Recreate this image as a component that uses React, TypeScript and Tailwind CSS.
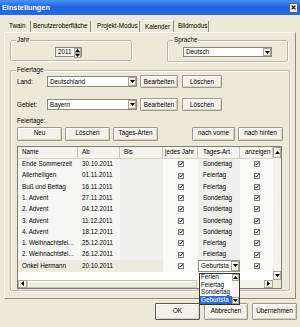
import React from "react";

type Dir = "up" | "down" | "left" | "right";

const rows = [
  ["Ende Sommerzeit", "30.10.2011", "Sondertag"],
  ["Allerheiligen", "01.11.2011", "Feiertag"],
  ["Buß und Bettag", "16.11.2011", "Feiertag"],
  ["1. Advent", "27.11.2011", "Sondertag"],
  ["2. Advent", "04.12.2011", "Sondertag"],
  ["3. Advent", "11.12.2011", "Sondertag"],
  ["4. Advent", "18.12.2011", "Sondertag"],
  ["1. Weihnachtsfei...", "25.12.2011", "Feiertag"],
  ["2. Weihnachtsfei...", "26.12.2011", "Feiertag"],
];

const tagesArten = ["Ferien", "Feiertag", "Sondertag", "Geburtsta"];

function Tri({ dir }: { dir: Dir }) {
  if (dir === "up")
    return (
      <svg width="5" height="3" viewBox="0 0 5 3">
        <polygon points="0,3 2.5,0 5,3" fill="#000" />
      </svg>
    );
  if (dir === "down")
    return (
      <svg width="5" height="3" viewBox="0 0 5 3">
        <polygon points="0,0 5,0 2.5,3" fill="#000" />
      </svg>
    );
  if (dir === "left")
    return (
      <svg width="3" height="5" viewBox="0 0 3 5">
        <polygon points="3,0 3,5 0,2.5" fill="#000" />
      </svg>
    );
  return (
    <svg width="3" height="5" viewBox="0 0 3 5">
      <polygon points="0,0 0,5 3,2.5" fill="#000" />
    </svg>
  );
}

function ArrowBtn({ dir, className }: { dir: Dir; className: string }) {
  return (
    <div
      className={
        "flex shrink-0 items-center justify-center bg-[#F1EFE5] border border-[#A9A695] shadow-[inset_1px_1px_0_#fff] " +
        className
      }
    >
      <Tri dir={dir} />
    </div>
  );
}

function Btn({
  className,
  children,
}: {
  className: string;
  children: React.ReactNode;
}) {
  return (
    <div
      className={
        "flex shrink-0 items-center justify-center rounded-[1px] bg-[#F4F2E8] shadow-[inset_1px_1px_0_#fff,inset_-1px_-1px_0_#D6D2C2] " +
        className
      }
    >
      {children}
    </div>
  );
}

function Combo({ className, value }: { className: string; value: string }) {
  return (
    <div className={"flex shrink-0 bg-white border border-[#8C8A7E] " + className}>
      <div className="flex flex-1 items-center pl-[2px] whitespace-nowrap overflow-hidden">
        {value}
      </div>
      <ArrowBtn dir="down" className="w-[8px]" />
    </div>
  );
}

function Check() {
  return (
    <svg width="6" height="6" viewBox="0 0 6 6">
      <rect x="0.5" y="0.5" width="5" height="5" fill="#fff" stroke="#7A7A7A" />
      <path d="M1.3 2.7 L2.5 4 L4.7 1.4" fill="none" stroke="#000" strokeWidth="1" />
    </svg>
  );
}

function HeadCell({ className, children }: { className: string; children: React.ReactNode }) {
  return (
    <div
      className={
        "flex h-full shrink-0 items-center border-r border-[#C9C6B6] " + className
      }
    >
      {children}
    </div>
  );
}

export default function App() {
  return (
    <div className="w-[300px] h-[327px] overflow-hidden bg-[#ECE9D8] flex flex-col font-['Liberation_Sans',Arial,sans-serif] text-[6.3px] leading-none text-black">
      {/* title bar */}
      <div className="h-[15px] shrink-0 flex items-center justify-between bg-linear-to-b from-[#4B92F5] via-[#1D62DD] to-[#2A6BE3]">
        <span className="pl-[2px] text-[7.3px] font-bold text-white">Einstellungen</span>
        <div className="mr-[2px] w-[9px] h-[10px] flex items-center justify-center bg-[#F0F0EC] border border-[#4F5F80]">
          <svg width="5" height="5" viewBox="0 0 5 5">
            <path d="M0.6 0.6 L4.4 4.4 M4.4 0.6 L0.6 4.4" stroke="#000" strokeWidth="1.3" />
          </svg>
        </div>
      </div>

      {/* tabs */}
      <div className="mt-[4px] h-[13px] shrink-0 flex items-end pl-[5px]">
        <div className="w-[26px] h-[11px] flex items-center pl-[4px] border-r border-[#8F8C7E]">Twain</div>
        <div className="w-[60px] h-[11px] flex items-center pl-[2px] border-r border-[#8F8C7E]">Benutzeroberfläche</div>
        <div className="w-[49px] h-[11px] flex items-center pl-[6px] border-r border-[#8F8C7E]">Projekt-Modus</div>
        <div className="w-[34px] h-[13px] -mb-px flex items-center pl-[5px] bg-[#ECE9D8] border-t border-r border-t-white border-r-[#8F8C7E]">Kalender</div>
        <div className="w-[35px] h-[11px] flex items-center pl-[4px] border-r border-[#8F8C7E]">Bildmodus</div>
      </div>

      {/* tab panel */}
      <div className="mx-[4px] h-[267px] shrink-0 flex flex-col border border-t-white border-l-white border-r-[#8F8C7E] border-b-[#8F8C7E]">
        <div className="mt-[4px] flex">
          <fieldset className="ml-[5px] w-[122px] h-[24px] border border-[#BAB7A8] rounded-[2px] shadow-[1px_1px_0_#fff,inset_1px_1px_0_#fff]">
            <legend className="ml-[5px] px-[1px]">Jahr</legend>
            <div className="mt-[4px] ml-[44px] w-[27px] h-[10px] flex bg-white border border-[#8C8A7E]">
              <div className="flex flex-1 items-center pl-[2px]">2011</div>
              <div className="w-[7px] flex flex-col">
                <ArrowBtn dir="up" className="flex-1" />
                <ArrowBtn dir="down" className="flex-1" />
              </div>
            </div>
          </fieldset>
          <fieldset className="ml-[35px] w-[121px] h-[25px] border border-[#BAB7A8] rounded-[2px] shadow-[1px_1px_0_#fff,inset_1px_1px_0_#fff]">
            <legend className="ml-[5px] px-[1px]">Sprache</legend>
            <Combo className="mt-[4px] ml-[15px] w-[89px] h-[10px]" value="Deutsch" />
          </fieldset>
        </div>

        <fieldset className="mt-[5px] ml-[5px] w-[280px] h-[224px] border border-[#BAB7A8] rounded-[2px] shadow-[1px_1px_0_#fff,inset_1px_1px_0_#fff]">
          <legend className="ml-[5px] px-[1px]">Feiertage</legend>

          <div className="mt-[2px] h-[13px] flex items-center">
            <div className="ml-[6px] w-[30px]">Land:</div>
            <Combo className="w-[90px] h-[11px]" value="Deutschland" />
            <Btn className="ml-[3px] w-[38px] h-[13px] border border-[#9C9A8C]">Bearbeiten</Btn>
            <Btn className="ml-[4px] w-[40px] h-[13px] border border-[#9C9A8C]">Löschen</Btn>
          </div>

          <div className="mt-[10px] h-[13px] flex items-center">
            <div className="ml-[6px] w-[30px]">Gebiet:</div>
            <Combo className="w-[90px] h-[11px]" value="Bayern" />
            <Btn className="ml-[3px] w-[38px] h-[13px] border border-[#9C9A8C]">Bearbeiten</Btn>
            <Btn className="ml-[4px] w-[40px] h-[13px] border border-[#9C9A8C]">Löschen</Btn>
          </div>

          <div className="mt-[7px] ml-[6px]">Feiertage:</div>

          <div className="mt-[2px] h-[14px] flex">
            <Btn className="ml-[6px] w-[45px] border border-[#9C9A8C]">Neu</Btn>
            <Btn className="ml-[3px] w-[45px] border border-[#9C9A8C]">Löschen</Btn>
            <Btn className="ml-[3px] w-[45px] border border-[#9C9A8C]">Tages-Arten</Btn>
            <Btn className="ml-[34px] w-[43px] border border-[#9C9A8C]">nach vorne</Btn>
            <Btn className="ml-[3px] w-[45px] border border-[#9C9A8C]">nach hinten</Btn>
          </div>

          {/* grid */}
          <div className="mt-[5px] ml-[6px] w-[265px] h-[143px] flex flex-col bg-white border border-[#7F7D72]">
            <div className="h-[133px] flex">
              <div className="w-[255px] flex flex-col">
                <div className="h-[12px] shrink-0 flex bg-[#F4F3EE] border-b border-[#D6D2C2]">
                  <HeadCell className="w-[60px] pl-[4px]">Name</HeadCell>
                  <HeadCell className="w-[42px] pl-[4px]">Ab</HeadCell>
                  <HeadCell className="w-[43px] pl-[4px]">Bis</HeadCell>
                  <HeadCell className="w-[35px] pl-[2px]">jedes Jahr</HeadCell>
                  <HeadCell className="w-[42px] pl-[5px]">Tages-Art</HeadCell>
                  <HeadCell className="w-[33px] pl-[5px]">anzeigen</HeadCell>
                </div>
                {rows.map((r) => (
                  <div key={r[0]} className="h-[11.3px] shrink-0 flex">
                    <div className="w-[60px] flex items-center pl-[4px] whitespace-nowrap overflow-hidden bg-[#F6F6F4]">{r[0]}</div>
                    <div className="w-[42px] flex items-center pl-[4px] bg-[#F6F6F4]">{r[1]}</div>
                    <div className="w-[43px] bg-[#EFEFED]"></div>
                    <div className="w-[35px] flex items-center justify-center bg-[#FAFAF8]">
                      <Check />
                    </div>
                    <div className="w-[42px] flex items-center pl-[5px] bg-[#EFEFED]">{r[2]}</div>
                    <div className="w-[33px] flex items-center justify-center bg-[#FAFAF8]">
                      <Check />
                    </div>
                  </div>
                ))}
                <div className="h-[11.3px] shrink-0 flex">
                  <div className="w-[60px] flex items-center pl-[4px] whitespace-nowrap bg-[#EDEAE0]">Onkel Hermann</div>
                  <div className="w-[42px] flex items-center pl-[4px] bg-[#EDEAE0]">20.10.2011</div>
                  <div className="w-[43px] bg-[#EDEAE0]"></div>
                  <div className="w-[35px] flex items-center justify-center bg-[#FAFAF8]">
                    <Check />
                  </div>
                  <div className="relative w-[42px] flex">
                    <Combo className="w-[42px] h-full" value="Geburtsta" />
                    <div className="absolute left-[1px] top-full mt-[1px] z-10 w-[41px] h-[32px] flex bg-white border border-[#333]">
                      <div className="flex-1 flex flex-col">
                        {tagesArten.map((t) => (
                          <div
                            key={t}
                            className={
                              t === "Geburtsta"
                                ? "h-[7.5px] flex items-center pl-[1px] bg-[#316AC5] text-white"
                                : "h-[7.5px] flex items-center pl-[1px]"
                            }
                          >
                            {t}
                          </div>
                        ))}
                      </div>
                      <div className="w-[7px] flex flex-col bg-[#F4F3EE]">
                        <ArrowBtn dir="up" className="h-[7px]" />
                        <div className="flex-1"></div>
                        <ArrowBtn dir="down" className="h-[7px]" />
                      </div>
                    </div>
                  </div>
                  <div className="w-[33px] flex items-center justify-center bg-[#FAFAF8]">
                    <Check />
                  </div>
                </div>
                <div className="flex-1 bg-white"></div>
              </div>
              <div className="w-[8px] flex flex-col bg-[#F3F2EC]">
                <ArrowBtn dir="up" className="h-[11px]" />
                <div className="flex-1"></div>
                <ArrowBtn dir="down" className="h-[9px]" />
              </div>
            </div>
            <div className="h-[8px] flex">
              <div className="w-[255px] flex bg-[#F3F2EC]">
                <ArrowBtn dir="left" className="w-[9px]" />
                <div className="w-[170px] bg-[#EDEBE0] border border-[#C4C1B2] shadow-[inset_1px_1px_0_#fff]"></div>
                <div className="flex-1"></div>
                <ArrowBtn dir="right" className="w-[9px]" />
              </div>
              <div className="flex-1 bg-[#ECE9D8]"></div>
            </div>
          </div>
        </fieldset>
      </div>

      {/* dialog buttons */}
      <div className="mt-[4px] h-[17px] shrink-0 flex">
        <Btn className="ml-[155px] w-[45px] border border-[#5C5A50]">OK</Btn>
        <Btn className="ml-[4px] w-[44px] border border-[#9C9A8C]">Abbrechen</Btn>
        <Btn className="ml-[4px] w-[45px] border border-[#9C9A8C]">Übernehmen</Btn>
      </div>
    </div>
  );
}
